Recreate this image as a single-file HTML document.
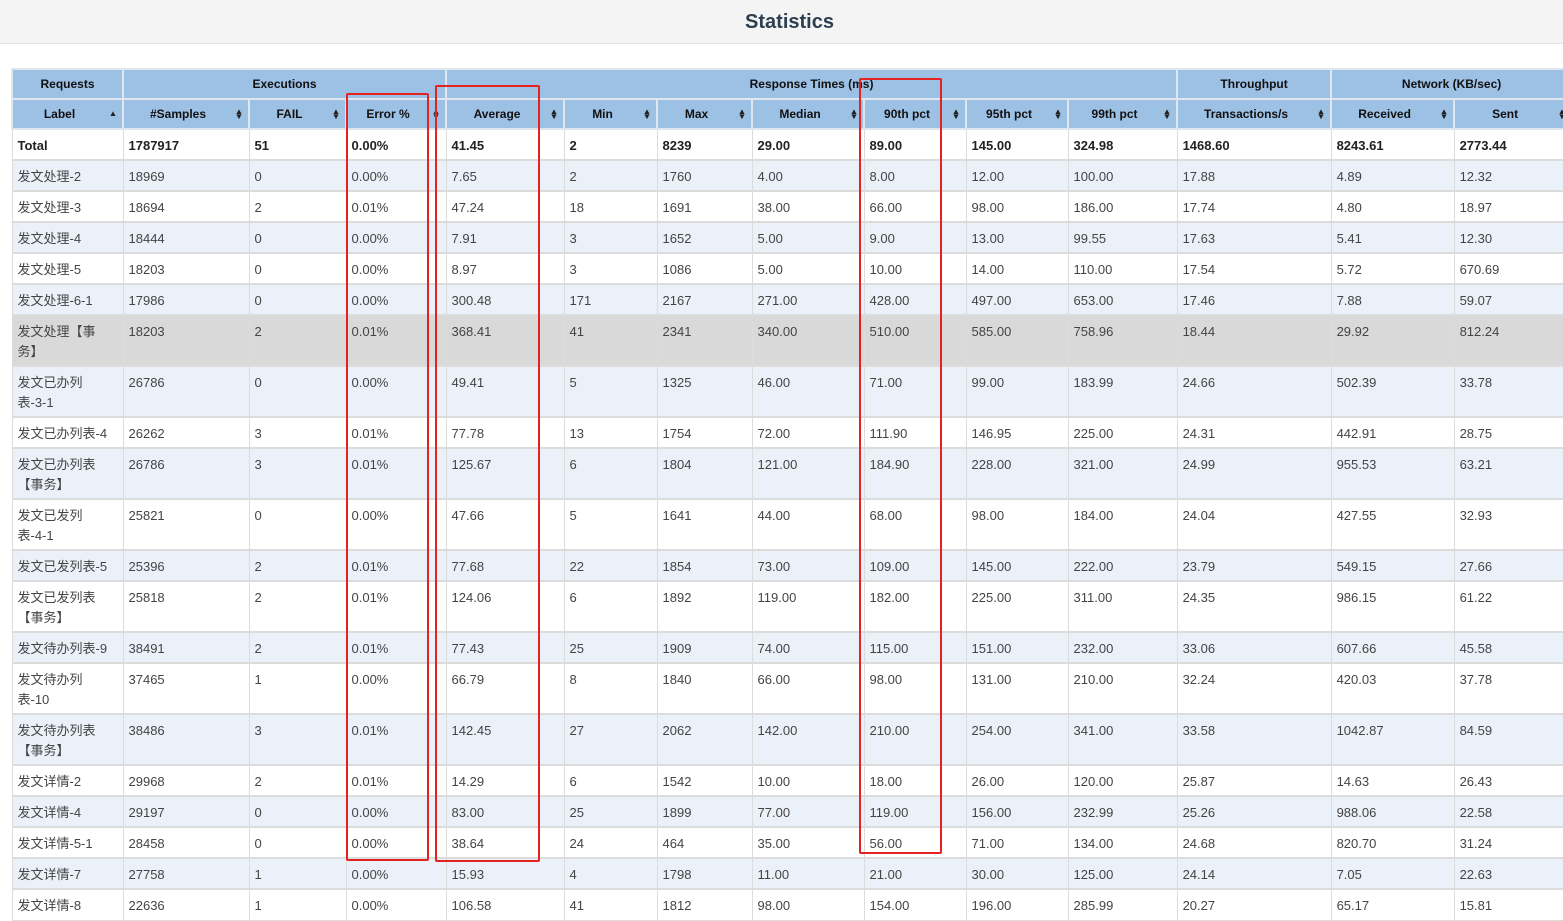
<!DOCTYPE html>
<html><head><meta charset="utf-8"><style>
*{margin:0;padding:0;box-sizing:border-box}
body{width:1563px;height:906px;overflow:hidden;background:#fff;font-family:"Liberation Sans","Noto Sans CJK SC",sans-serif;position:relative}
.title{height:44px;background:#f4f4f4;border-bottom:1px solid #e4e4e4;text-align:center;font-size:20px;font-weight:bold;color:#2c3e50;line-height:44px;padding-left:16px}
table{position:absolute;left:11px;top:68px;border-collapse:collapse;table-layout:fixed;width:1560px}
th{background:#9dc0e5;color:#111;font-size:12px;font-weight:bold;border:2px solid #dfe6ee;height:30px;text-align:center;position:relative;padding:0 16px 0 0}
tr.h1 th{padding:0}
td{border:1px solid #dcdcdc;border-top:2px solid #dcdcdc;font-size:13px;color:#444;vertical-align:top;padding:6px 5px 0;line-height:20px;white-space:nowrap}
tr.t td{font-weight:bold;color:#222;background:#fff}
tr.b td{background:#eaf1f9}
tr.w td{background:#fff}
tr.g td{background:#d9d9d9}
tr.s{height:31px} tr.d{height:51px}
.ar{position:absolute;right:5px;top:9px;font-size:8px;line-height:5px;color:#222;transform:scaleX(1.1)}
.ar.one{top:11px}
.red{position:absolute;border:2px solid #e32222;border-radius:2px}
</style></head><body>
<div class="title">Statistics</div>
<table>
<colgroup><col style="width:111px"><col style="width:126px"><col style="width:97px"><col style="width:100px"><col style="width:118px"><col style="width:93px"><col style="width:95px"><col style="width:112px"><col style="width:102px"><col style="width:102px"><col style="width:109px"><col style="width:154px"><col style="width:123px"><col style="width:118px"></colgroup>
<tr class="h1"><th>Requests</th><th colspan="3">Executions</th><th colspan="7">Response Times (ms)</th><th>Throughput</th><th colspan="2">Network (KB/sec)</th></tr>
<tr><th>Label<span class="ar one">▲</span></th><th>#Samples<span class="ar">▲<br>▼</span></th><th>FAIL<span class="ar">▲<br>▼</span></th><th>Error %<span class="ar">▲<br>▼</span></th><th>Average<span class="ar">▲<br>▼</span></th><th>Min<span class="ar">▲<br>▼</span></th><th>Max<span class="ar">▲<br>▼</span></th><th>Median<span class="ar">▲<br>▼</span></th><th>90th pct<span class="ar">▲<br>▼</span></th><th>95th pct<span class="ar">▲<br>▼</span></th><th>99th pct<span class="ar">▲<br>▼</span></th><th>Transactions/s<span class="ar">▲<br>▼</span></th><th>Received<span class="ar">▲<br>▼</span></th><th>Sent<span class="ar">▲<br>▼</span></th></tr>
<tr class="t s"><td>Total</td><td>1787917</td><td>51</td><td>0.00%</td><td>41.45</td><td>2</td><td>8239</td><td>29.00</td><td>89.00</td><td>145.00</td><td>324.98</td><td>1468.60</td><td>8243.61</td><td>2773.44</td></tr>
<tr class="b s"><td>发文处理-2</td><td>18969</td><td>0</td><td>0.00%</td><td>7.65</td><td>2</td><td>1760</td><td>4.00</td><td>8.00</td><td>12.00</td><td>100.00</td><td>17.88</td><td>4.89</td><td>12.32</td></tr>
<tr class="w s"><td>发文处理-3</td><td>18694</td><td>2</td><td>0.01%</td><td>47.24</td><td>18</td><td>1691</td><td>38.00</td><td>66.00</td><td>98.00</td><td>186.00</td><td>17.74</td><td>4.80</td><td>18.97</td></tr>
<tr class="b s"><td>发文处理-4</td><td>18444</td><td>0</td><td>0.00%</td><td>7.91</td><td>3</td><td>1652</td><td>5.00</td><td>9.00</td><td>13.00</td><td>99.55</td><td>17.63</td><td>5.41</td><td>12.30</td></tr>
<tr class="w s"><td>发文处理-5</td><td>18203</td><td>0</td><td>0.00%</td><td>8.97</td><td>3</td><td>1086</td><td>5.00</td><td>10.00</td><td>14.00</td><td>110.00</td><td>17.54</td><td>5.72</td><td>670.69</td></tr>
<tr class="b s"><td>发文处理-6-1</td><td>17986</td><td>0</td><td>0.00%</td><td>300.48</td><td>171</td><td>2167</td><td>271.00</td><td>428.00</td><td>497.00</td><td>653.00</td><td>17.46</td><td>7.88</td><td>59.07</td></tr>
<tr class="g d"><td>发文处理【事<br>务】</td><td>18203</td><td>2</td><td>0.01%</td><td>368.41</td><td>41</td><td>2341</td><td>340.00</td><td>510.00</td><td>585.00</td><td>758.96</td><td>18.44</td><td>29.92</td><td>812.24</td></tr>
<tr class="b d"><td>发文已办列<br>表-3-1</td><td>26786</td><td>0</td><td>0.00%</td><td>49.41</td><td>5</td><td>1325</td><td>46.00</td><td>71.00</td><td>99.00</td><td>183.99</td><td>24.66</td><td>502.39</td><td>33.78</td></tr>
<tr class="w s"><td>发文已办列表-4</td><td>26262</td><td>3</td><td>0.01%</td><td>77.78</td><td>13</td><td>1754</td><td>72.00</td><td>111.90</td><td>146.95</td><td>225.00</td><td>24.31</td><td>442.91</td><td>28.75</td></tr>
<tr class="b d"><td>发文已办列表<br>【事务】</td><td>26786</td><td>3</td><td>0.01%</td><td>125.67</td><td>6</td><td>1804</td><td>121.00</td><td>184.90</td><td>228.00</td><td>321.00</td><td>24.99</td><td>955.53</td><td>63.21</td></tr>
<tr class="w d"><td>发文已发列<br>表-4-1</td><td>25821</td><td>0</td><td>0.00%</td><td>47.66</td><td>5</td><td>1641</td><td>44.00</td><td>68.00</td><td>98.00</td><td>184.00</td><td>24.04</td><td>427.55</td><td>32.93</td></tr>
<tr class="b s"><td>发文已发列表-5</td><td>25396</td><td>2</td><td>0.01%</td><td>77.68</td><td>22</td><td>1854</td><td>73.00</td><td>109.00</td><td>145.00</td><td>222.00</td><td>23.79</td><td>549.15</td><td>27.66</td></tr>
<tr class="w d"><td>发文已发列表<br>【事务】</td><td>25818</td><td>2</td><td>0.01%</td><td>124.06</td><td>6</td><td>1892</td><td>119.00</td><td>182.00</td><td>225.00</td><td>311.00</td><td>24.35</td><td>986.15</td><td>61.22</td></tr>
<tr class="b s"><td>发文待办列表-9</td><td>38491</td><td>2</td><td>0.01%</td><td>77.43</td><td>25</td><td>1909</td><td>74.00</td><td>115.00</td><td>151.00</td><td>232.00</td><td>33.06</td><td>607.66</td><td>45.58</td></tr>
<tr class="w d"><td>发文待办列<br>表-10</td><td>37465</td><td>1</td><td>0.00%</td><td>66.79</td><td>8</td><td>1840</td><td>66.00</td><td>98.00</td><td>131.00</td><td>210.00</td><td>32.24</td><td>420.03</td><td>37.78</td></tr>
<tr class="b d"><td>发文待办列表<br>【事务】</td><td>38486</td><td>3</td><td>0.01%</td><td>142.45</td><td>27</td><td>2062</td><td>142.00</td><td>210.00</td><td>254.00</td><td>341.00</td><td>33.58</td><td>1042.87</td><td>84.59</td></tr>
<tr class="w s"><td>发文详情-2</td><td>29968</td><td>2</td><td>0.01%</td><td>14.29</td><td>6</td><td>1542</td><td>10.00</td><td>18.00</td><td>26.00</td><td>120.00</td><td>25.87</td><td>14.63</td><td>26.43</td></tr>
<tr class="b s"><td>发文详情-4</td><td>29197</td><td>0</td><td>0.00%</td><td>83.00</td><td>25</td><td>1899</td><td>77.00</td><td>119.00</td><td>156.00</td><td>232.99</td><td>25.26</td><td>988.06</td><td>22.58</td></tr>
<tr class="w s"><td>发文详情-5-1</td><td>28458</td><td>0</td><td>0.00%</td><td>38.64</td><td>24</td><td>464</td><td>35.00</td><td>56.00</td><td>71.00</td><td>134.00</td><td>24.68</td><td>820.70</td><td>31.24</td></tr>
<tr class="b s"><td>发文详情-7</td><td>27758</td><td>1</td><td>0.00%</td><td>15.93</td><td>4</td><td>1798</td><td>11.00</td><td>21.00</td><td>30.00</td><td>125.00</td><td>24.14</td><td>7.05</td><td>22.63</td></tr>
<tr class="w s"><td>发文详情-8</td><td>22636</td><td>1</td><td>0.00%</td><td>106.58</td><td>41</td><td>1812</td><td>98.00</td><td>154.00</td><td>196.00</td><td>285.99</td><td>20.27</td><td>65.17</td><td>15.81</td></tr>
</table>
<div class="red" style="left:346px;top:93px;width:83px;height:768px"></div>
<div class="red" style="left:435px;top:85px;width:105px;height:777px"></div>
<div class="red" style="left:859px;top:78px;width:83px;height:776px"></div>
</body></html>
